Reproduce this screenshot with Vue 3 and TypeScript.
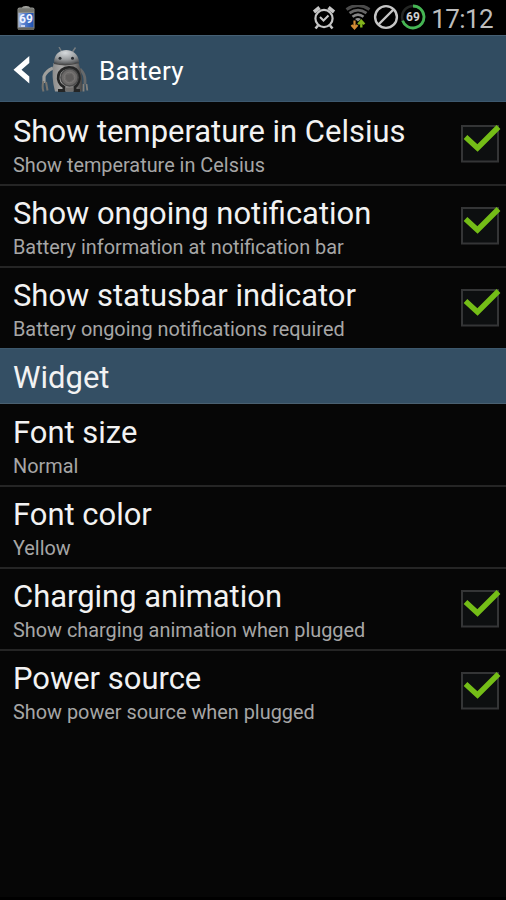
<script setup lang="ts">
interface Preference {
  title: string
  summary: string
  checked?: boolean
}

interface PreferenceGroup {
  heading?: string
  items: Preference[]
}

const groups: PreferenceGroup[] = [
  {
    items: [
      { title: 'Show temperature in Celsius', summary: 'Show temperature in Celsius', checked: true },
      { title: 'Show ongoing notification', summary: 'Battery information at notification bar', checked: true },
      { title: 'Show statusbar indicator', summary: 'Battery ongoing notifications required', checked: true },
    ],
  },
  {
    heading: 'Widget',
    items: [
      { title: 'Font size', summary: 'Normal' },
      { title: 'Font color', summary: 'Yellow' },
      { title: 'Charging animation', summary: 'Show charging animation when plugged', checked: true },
      { title: 'Power source', summary: 'Show power source when plugged', checked: true },
    ],
  },
]
</script>

<template>
  <div class="screen">
    <header class="status">
      <svg class="cell" width="18" height="26" viewBox="0 0 18 26">
        <defs>
          <linearGradient id="cellFill" x1="0" y1="0" x2="1" y2="0">
            <stop offset="0" stop-color="#a9b9dc" />
            <stop offset="0.35" stop-color="#5d83cf" />
            <stop offset="1" stop-color="#1c4fae" />
          </linearGradient>
        </defs>
        <ellipse cx="9" cy="3" rx="4" ry="2" fill="#a9a9a4" />
        <rect x="0.5" y="2.5" width="17" height="22.5" rx="2" fill="#8d8f8b" />
        <rect x="1.5" y="8" width="15" height="14.5" fill="url(#cellFill)" />
        <rect x="1" y="3.5" width="16" height="3.5" rx="1.5" fill="#777873" />
        <rect x="1" y="22.5" width="16" height="2.5" rx="1" fill="#66645d" />
        <rect x="4" y="20" width="4" height="2" fill="#c9d4ef" />
        <text x="9" y="17.8" text-anchor="middle" class="cell-text">69</text>
      </svg>
      <div class="tray">
        <svg class="alarm" width="24" height="25" viewBox="0 0 24 25" fill="none" stroke="#c6c6c6">
          <circle cx="12" cy="13.5" r="8.6" stroke-width="2.2" />
          <path d="M2 7 L7.5 2.5 M22 7 L16.5 2.5" stroke-width="3.6" />
          <path d="M8 12 L11.5 15.5 L16.5 10.5" stroke-width="2" />
          <path d="M6 20.5 L3.5 23.5 M18 20.5 L20.5 23.5" stroke-width="2.6" />
        </svg>
        <svg class="wifi" width="26" height="26" viewBox="0 0 26 26" fill="none">
          <path d="M1.5 4.5 Q13 -3.5 24.5 4.5" stroke="#4b4b4b" stroke-width="3" />
          <path d="M4.5 8.2 Q13 2 21.5 8.2" stroke="#656565" stroke-width="2.8" />
          <path d="M7.5 11.8 Q13 7.4 18.5 11.8" stroke="#858585" stroke-width="2.6" />
          <path d="M10 14 Q13 11.8 16 14 L13 16.5Z" fill="#929292" />
          <path d="M9.5 15.5 V22.5 M6.5 20 L9.5 23.3 L12.5 20" stroke="#d58b35" stroke-width="2.2" />
          <path d="M16.3 22.5 V16 M13.2 19.3 L16.3 15.8 L19.4 19.3" stroke="#83b51c" stroke-width="2.4" />
        </svg>
        <svg class="blocked" width="26" height="26" viewBox="0 0 26 26" fill="none" stroke="#c6c6c6" stroke-width="2.4">
          <circle cx="13" cy="13" r="10.9" />
          <path d="M5.5 20.5 L20.5 5.5" />
        </svg>
        <svg class="gauge" width="26" height="26" viewBox="0 0 26 26" fill="none">
          <circle cx="13" cy="13" r="11" stroke="#242624" stroke-width="2.4" />
          <path d="M13 2 A11 11 0 1 1 2.6 16.6" stroke="#45b653" stroke-width="2.8" />
          <text x="13" y="17.3" text-anchor="middle" class="gauge-text">69</text>
        </svg>
        <span class="clock">17:12</span>
      </div>
    </header>

    <nav class="bar">
      <svg class="back" width="18" height="30" viewBox="0 0 18 30">
        <path d="M16.3 0 V7 L8.5 13.7 L16.3 20.5 V27.5 L0.5 13.7Z" fill="#fff" />
      </svg>
      <svg class="robot" width="48" height="48" viewBox="0 0 48 48" fill="none">
        <defs>
          <linearGradient id="metal" x1="0" y1="0" x2="1" y2="0">
            <stop offset="0" stop-color="#8b8b8a" />
            <stop offset="0.3" stop-color="#aaa9a8" />
            <stop offset="0.75" stop-color="#7c7b7a" />
            <stop offset="1" stop-color="#454545" />
          </linearGradient>
          <radialGradient id="dome" cx="0.45" cy="0.2" r="0.8">
            <stop offset="0" stop-color="#d6dadd" />
            <stop offset="0.6" stop-color="#999c9e" />
            <stop offset="1" stop-color="#555759" />
          </radialGradient>
        </defs>
        <path d="M18 0 L20.5 4.5 M34.5 0.5 L31.5 5" stroke="#777d80" stroke-width="1.4" />
        <path d="M12 21 Q5 24 3 29.5 V36" stroke="#a0a09d" stroke-width="3.2" />
        <path d="M2.5 34 Q0.8 40 2.5 44.5 M5 35 L6.5 43.5" stroke="#74736e" stroke-width="2" />
        <path d="M39 22 Q44 27 44 33 V37" stroke="#66696b" stroke-width="2.8" />
        <path d="M42.5 37 V44.5 M45.5 37 L46.3 43.5" stroke="#84817c" stroke-width="1.8" />
        <path d="M12.5 16 Q10 30 14 44.5 H41 Q42.5 29 37.5 16Z" fill="url(#metal)" />
        <path d="M13 15.5 C13 -1 37 -1 38 15 Q25 19 13 15.5Z" fill="url(#dome)" />
        <path d="M13 16.3 Q25 19.5 38 15.7" stroke="#4a4a4a" stroke-width="1.4" />
        <circle cx="19" cy="11.3" r="1.5" fill="#272b30" />
        <circle cx="31.5" cy="11.3" r="1.5" fill="#272b30" />
        <path d="M17 43.5 H23 V40 C13.5 35 16 20.5 28 20.5 C40 20.5 41 35 34 40 V43.5 H39" stroke="#242525" stroke-width="2.8" />
        <circle cx="28.5" cy="30.5" r="8.6" fill="#6a6867" stroke="#4b4b4b" stroke-width="1.5" />
        <circle cx="28.5" cy="30.5" r="5.4" stroke="#7c7977" stroke-width="1" />
        <path d="M25 28 L31 27 L33 32 L28 35 L25 32Z" fill="#5f5d5c" />
        <path d="M25 40.5 H32 V44.5 H25Z" fill="#6f6d6b" />
      </svg>
      <h1 class="bar-title">Battery</h1>
    </nav>

    <main>
      <section v-for="(group, g) in groups" :key="g">
        <h2 v-if="group.heading" class="heading">{{ group.heading }}</h2>
        <ul class="list">
          <li v-for="item in group.items" :key="item.title" class="row">
            <div class="text">
              <div class="title">{{ item.title }}</div>
              <div class="summary">{{ item.summary }}</div>
            </div>
            <svg v-if="item.checked" class="check" width="41" height="41" viewBox="0 0 41 41" fill="none">
              <rect x="2" y="3" width="36" height="35.5" fill="#0d0f10" stroke="#343536" stroke-width="2" />
              <path d="M5.5 14 L17.5 25 L38.5 4" stroke="#74bd17" stroke-width="5.4" />
            </svg>
          </li>
        </ul>
      </section>
    </main>
  </div>
</template>

<style>
body {
  margin: 0;
  background: #060606;
}
</style>

<style scoped>
.screen {
  width: 506px;
  height: 900px;
  overflow: hidden;
  box-sizing: border-box;
  border-bottom: 3px solid #000;
  background: #060606;
  color: #f2f2f2;
  font-family: Roboto, sans-serif;
}
.status {
  display: flex;
  justify-content: space-between;
  align-items: flex-start;
  height: 35px;
  padding: 5px 13px 0 17px;
  box-sizing: border-box;
  background: #000;
}
.cell-text {
  font: bold 12px Roboto, sans-serif;
  fill: #eef3ff;
}
.tray {
  display: flex;
  align-items: flex-start;
}
.wifi {
  margin-left: 9px;
}
.blocked {
  margin: -1px 0 0 2px;
}
.gauge {
  margin: -1px 0 0 1px;
}
.gauge-text {
  font: bold 12px Roboto, sans-serif;
  fill: #d0d0d0;
}
.clock {
  margin-left: 5px;
  font-size: 26px;
  line-height: 28px;
  letter-spacing: -0.6px;
  color: #bdbdbd;
}
.bar {
  display: flex;
  align-items: flex-start;
  height: 67px;
  padding: 11px 0 0 13px;
  box-sizing: border-box;
  border-top: 1px solid #466074;
  border-bottom: 1px solid #3d586e;
  background: #314c61;
}
.back {
  margin-top: 9px;
}
.robot {
  margin-left: 10px;
}
.bar-title {
  margin: 8px 0 0 10px;
  font-size: 26px;
  font-weight: 400;
  line-height: 32px;
  letter-spacing: 0.35px;
  color: #fff;
}
.list {
  margin: 0;
  padding: 0;
  list-style: none;
}
.row {
  display: flex;
  justify-content: space-between;
  align-items: flex-start;
  height: 82px;
  padding: 11px 5px 0 13px;
  box-sizing: border-box;
}
.row + .row {
  border-top: 2px solid #252525;
  padding-top: 9px;
}
.heading + .list .row:first-child {
  height: 81px;
  padding-top: 10px;
}
.title {
  font-size: 30.95px;
  line-height: 38px;
  white-space: nowrap;
}
.summary {
  margin-top: 2px;
  font-size: 19.87px;
  line-height: 26px;
  color: #a6a6a6;
  white-space: nowrap;
}
.check {
  margin-top: 10px;
}
.heading {
  height: 56px;
  margin: 0;
  padding: 10px 13px 0;
  box-sizing: border-box;
  border-top: 1px solid #3d586c;
  border-bottom: 1px solid #4a6070;
  background: #344f64;
  font-size: 31px;
  font-weight: 400;
  line-height: 38px;
}
</style>
